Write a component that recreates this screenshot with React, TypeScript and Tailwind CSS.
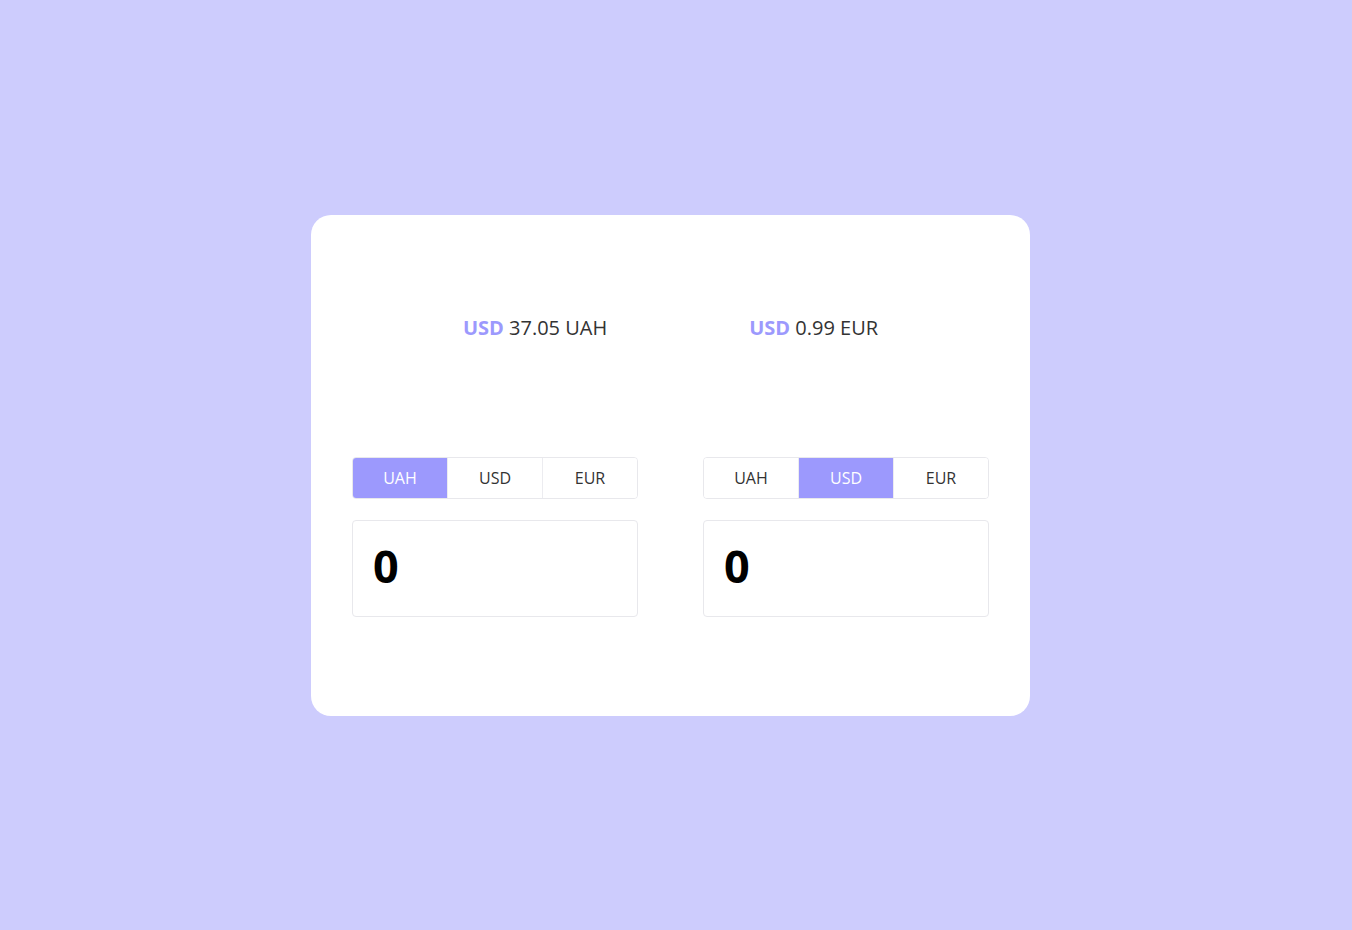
import React, { useState } from 'react';

const CURRENCIES = ['UAH', 'USD', 'EUR'];

interface BlockProps {
  initial: string;
}

const CurrencyBlock: React.FC<BlockProps> = ({ initial }) => {
  const [currency, setCurrency] = useState(initial);
  const [value, setValue] = useState('0');

  return (
    <div className="w-[286px] flex flex-col gap-[21px]">
      <div className="flex h-[42px] border border-[#e8e8ec] rounded-[4px] overflow-hidden">
        {CURRENCIES.map((c, i) => (
          <button
            key={c}
            onClick={() => setCurrency(c)}
            className={
              'flex-1 flex items-center justify-center text-[16px] ' +
              (currency === c ? 'bg-[#9c99fd] text-white ' : 'bg-white text-[#333] ') +
              (i > 0 ? 'border-l border-[#ececf0]' : '')
            }
          >
            {c}
          </button>
        ))}
      </div>
      <input
        value={value}
        onChange={(e) => setValue(e.target.value)}
        className="h-[97px] w-full border border-[#e8e8ec] rounded-[4px] pl-[20px] pr-[21px] pb-[6px] text-[45px] font-bold text-black outline-none"
      />
    </div>
  );
};

export default function App() {
  return (
    <div
      className="min-h-[930px] bg-[#cdccfd] flex justify-center pt-[215px] pr-[11px]"
      style={{ fontFamily: '"Open Sans", sans-serif' }}
    >
      <div className="w-[719px] h-[501px] bg-white rounded-[20px] px-[41px] pt-[99px]">
        <div className="flex justify-center gap-[142px] text-[20px] leading-[28px] text-[#333]">
          <div>
            <b className="text-[#9c99fd] font-bold">USD</b> 37.05 UAH
          </div>
          <div>
            <b className="text-[#9c99fd] font-bold">USD</b> 0.99 EUR
          </div>
        </div>
        <div className="flex justify-between mt-[115px]">
          <CurrencyBlock initial="UAH" />
          <CurrencyBlock initial="USD" />
        </div>
      </div>
    </div>
  );
}
